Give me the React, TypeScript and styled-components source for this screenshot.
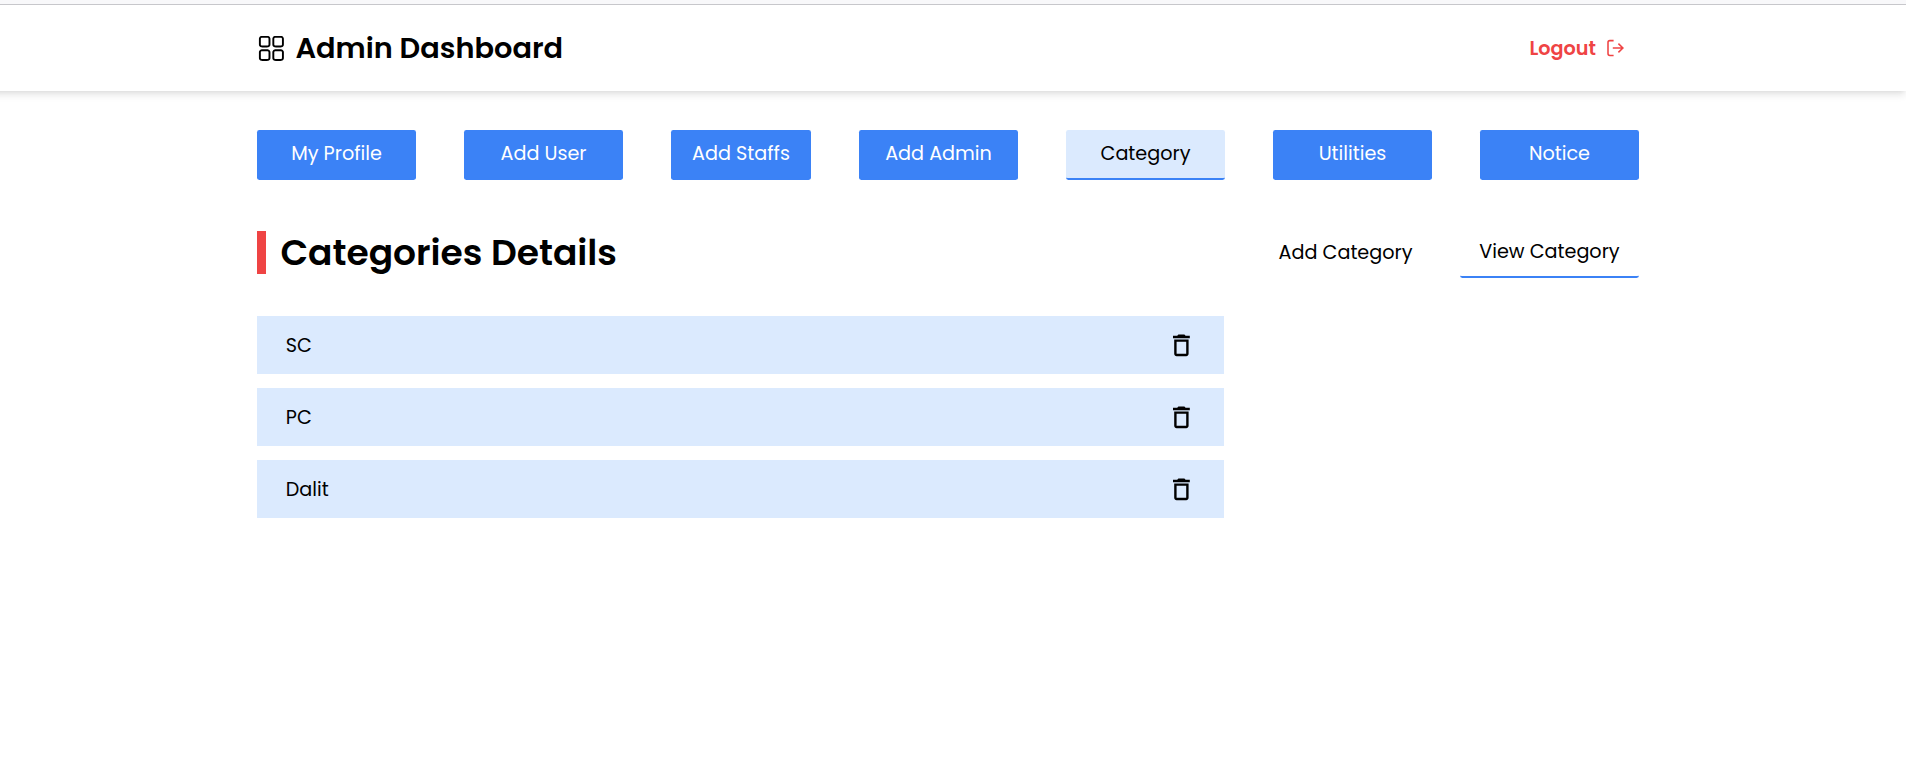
import styled, { createGlobalStyle, css } from "styled-components";
import { RxDashboard } from "react-icons/rx";
import { MdDeleteOutline } from "react-icons/md";

const GlobalStyle = createGlobalStyle`
  *, *::before, *::after { box-sizing: border-box; }
  body {
    margin: 0;
    background: #fff;
    color: #000;
    font-family: Poppins, Inter, sans-serif;
    font-size: 19.2px;
    overflow-x: hidden;
  }
  button { font: inherit; color: inherit; border: 0; background: none; padding: 0; cursor: pointer; white-space: nowrap; }
`;

const TopEdge = styled.div`
  height: 5px;
  background: #f8f8fa;
  border-bottom: 1px solid #c8c8cc;
`;

const Header = styled.header`
  height: 86px;
  background: #fff;
  margin-left: -10px;
  padding-left: 10px;
  box-shadow: 0 4.8px 7.2px -1.2px rgba(0, 0, 0, 0.1), 0 2.4px 4.8px -2.4px rgba(0, 0, 0, 0.1);
`;

const Container = styled.div`
  width: 1382px;
  margin-left: 257px;
`;

const HeaderInner = styled(Container)`
  height: 100%;
  display: flex;
  align-items: center;
  justify-content: space-between;
`;

const Brand = styled.div`
  display: flex;
  align-items: center;
  gap: 9.6px;
`;

const BrandName = styled.h1`
  margin: 0;
  font-size: 28.8px;
  line-height: 40px;
  font-weight: 600;
`;

const LogoutButton = styled.button`
  display: flex;
  align-items: center;
  gap: 10px;
  margin-right: 15px;
  color: #ef4444;
  font-weight: 600;
`;

const Nav = styled.nav`
  display: flex;
  justify-content: space-between;
  margin-top: 39px;
`;

const NavButton = styled.button<{ $active?: boolean; $width?: number }>`
  display: flex;
  align-items: center;
  justify-content: center;
  width: ${(p) => p.$width ?? 159}px;
  height: 50px;
  padding-bottom: 1px;
  border-bottom: 2px solid #3b82f6;
  border-radius: 2.4px;
  background: #3b82f6;
  color: #fff;
  ${(p) =>
    p.$active &&
    css`
      background: #dbeafe;
      color: #000;
    `}
`;

const SectionHead = styled.div`
  display: flex;
  justify-content: space-between;
  align-items: center;
  margin-top: 46px;
  height: 52px;
`;

const Title = styled.h2`
  margin: 0;
  padding-left: 14.4px;
  border-left: 9px solid #ef4444;
  font-size: 36px;
  line-height: 43px;
  font-weight: 600;
`;

const Tabs = styled.div`
  display: flex;
  align-items: center;
  gap: 28.8px;
  margin-right: 0.4px;
`;

const Tab = styled.button<{ $active?: boolean }>`
  height: 52px;
  padding: 0 19px;
  border-radius: 2.4px;
  border-bottom: ${(p) => (p.$active ? "2px solid #3b82f6" : "0")};
`;

const List = styled.ul`
  list-style: none;
  width: 967px;
  margin: 38px 0 0;
  padding: 0;
  display: flex;
  flex-direction: column;
  gap: 14px;
`;

const Item = styled.li`
  display: flex;
  align-items: center;
  justify-content: space-between;
  height: 58px;
  padding: 0 28px 0 28.8px;
  background: #dbeafe;
`;

const IconButton = styled.button`
  display: flex;
`;

function LogoutIcon() {
  return (
    <svg width="18" height="18" viewBox="0 0 18 18" fill="none" stroke="currentColor" strokeWidth="1.55">
      <path d="M7.6 1.6H3.8A1.8 1.8 0 0 0 2 3.4v11.2a1.8 1.8 0 0 0 1.8 1.8h3.8" />
      <path d="M6.8 9h10.2M12.4 4.6 16.9 9l-4.5 4.4" />
    </svg>
  );
}

const navItems = [
  { label: "My Profile" },
  { label: "Add User" },
  { label: "Add Staffs", width: 140 },
  { label: "Add Admin" },
  { label: "Category", active: true },
  { label: "Utilities" },
  { label: "Notice" },
];

const categories = ["SC", "PC", "Dalit"];

export default function App() {
  return (
    <>
      <GlobalStyle />
      <TopEdge />
      <Header>
        <HeaderInner>
          <Brand>
            <RxDashboard size={28.8} />
            <BrandName>Admin Dashboard</BrandName>
          </Brand>
          <LogoutButton>
            Logout
            <LogoutIcon />
          </LogoutButton>
        </HeaderInner>
      </Header>
      <Container as="main">
        <Nav>
          {navItems.map((item) => (
            <NavButton key={item.label} $active={item.active} $width={item.width}>
              {item.label}
            </NavButton>
          ))}
        </Nav>
        <SectionHead>
          <Title>Categories Details</Title>
          <Tabs>
            <Tab>Add Category</Tab>
            <Tab $active>View Category</Tab>
          </Tabs>
        </SectionHead>
        <List>
          {categories.map((name) => (
            <Item key={name}>
              {name}
              <IconButton aria-label={`Delete ${name}`}>
                <MdDeleteOutline size={28.8} />
              </IconButton>
            </Item>
          ))}
        </List>
      </Container>
    </>
  );
}
